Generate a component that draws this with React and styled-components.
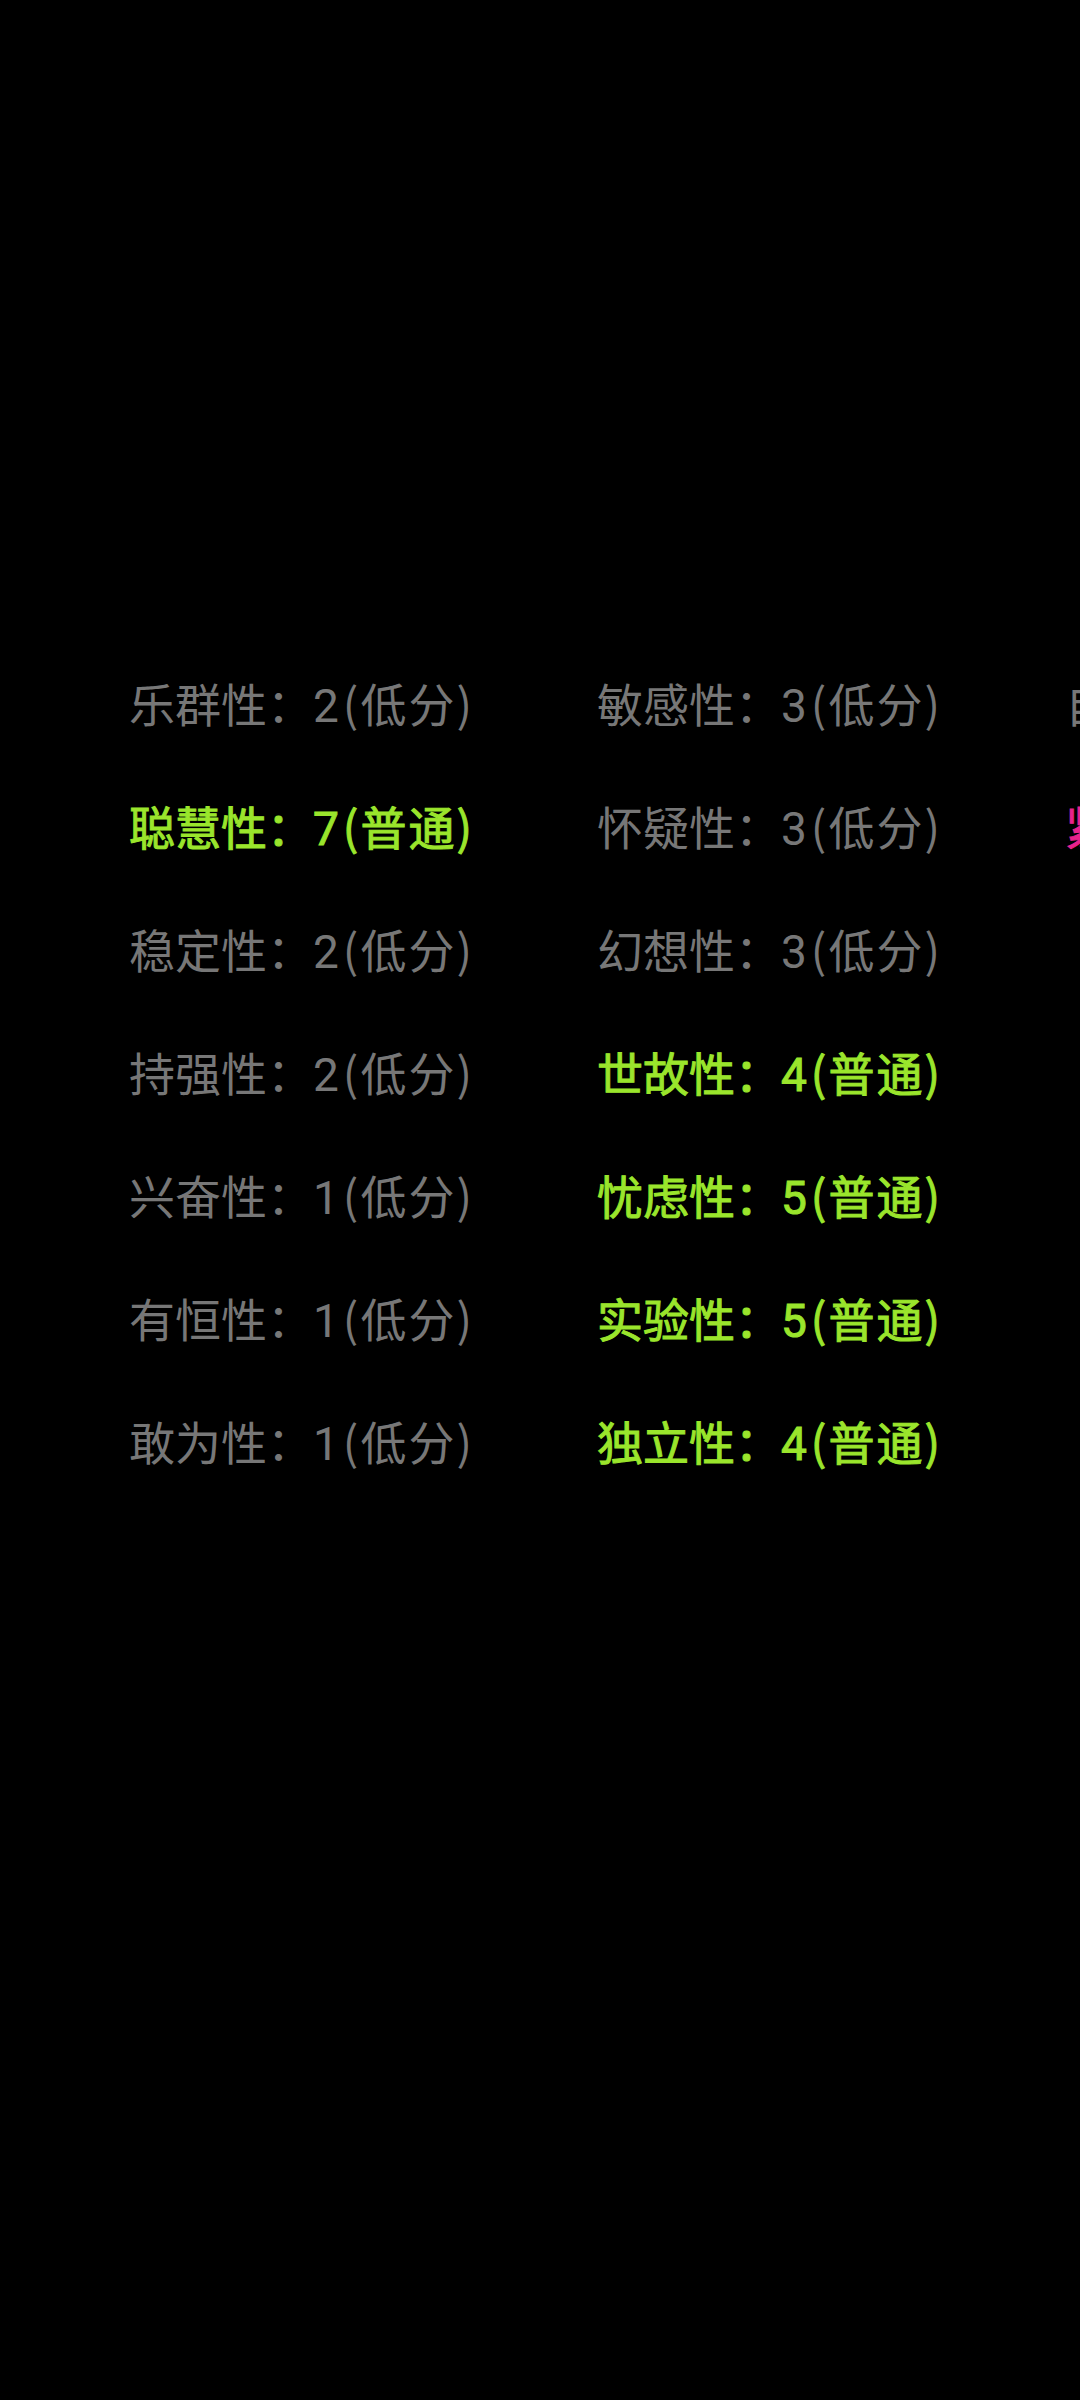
import React from 'react'
import styled, { createGlobalStyle } from 'styled-components'

const GlobalStyle = createGlobalStyle`
    html, body {
        margin: 0;
        padding: 0;
        background: #000000;
    }
    body {
        font-family: "Noto Sans CJK SC", sans-serif;
    }
`

const Screen = styled.div`
    width: 1080px;
    height: 2400px;
    background: #000000;
    overflow: hidden;
    padding: 641px 0 0 129px;
    box-sizing: border-box;
`

const Grid = styled.div`
    display: grid;
    grid-template-columns: repeat(3, 468px);
    grid-auto-flow: column;
    grid-template-rows: repeat(7, 123px);
`

const Factor = styled.div`
    font-family: "Noto Sans CJK SC", sans-serif;
    font-size: 46px;
    line-height: 123px;
    white-space: nowrap;
    font-weight: 400;
    color: ${p => p.$level === 'mid' ? '#9ae52c' : p.$level === 'high' ? '#e8228c' : '#777777'};
    -webkit-text-stroke: ${p => (p.$level === 'low' ? '0' : '1px')} currentColor;
`

const Score = styled.span`
    font-family: Roboto, sans-serif;
    margin-right: 4px;
`

const Paren = styled.span`
    font-family: "Noto Sans CJK SC", sans-serif;
    letter-spacing: 2px;
`

const factors = [
    ["乐群性", 2, "低分"],
    ["聪慧性", 7, "普通"],
    ["稳定性", 2, "低分"],
    ["持强性", 2, "低分"],
    ["兴奋性", 1, "低分"],
    ["有恒性", 1, "低分"],
    ["敢为性", 1, "低分"],
    ["敏感性", 3, "低分"],
    ["怀疑性", 3, "低分"],
    ["幻想性", 3, "低分"],
    ["世故性", 4, "普通"],
    ["忧虑性", 5, "普通"],
    ["实验性", 5, "普通"],
    ["独立性", 4, "普通"],
    ["自律性", 3, "低分"],
    ["紧张性", 8, "高分"],
]

const levelOf = label => label === "低分" ? 'low' : label === "普通" ? 'mid' : 'high'

const App = () => {
  return (
    <Screen>
        <GlobalStyle />
        <Grid>
            {factors.map(([name, score, label]) => (
                <Factor key={name} $level={levelOf(label)}>
                    {name}：<Score>{score}</Score><Paren>({label})</Paren>
                </Factor>
            ))}
        </Grid>
    </Screen>
  )
}

export default App
